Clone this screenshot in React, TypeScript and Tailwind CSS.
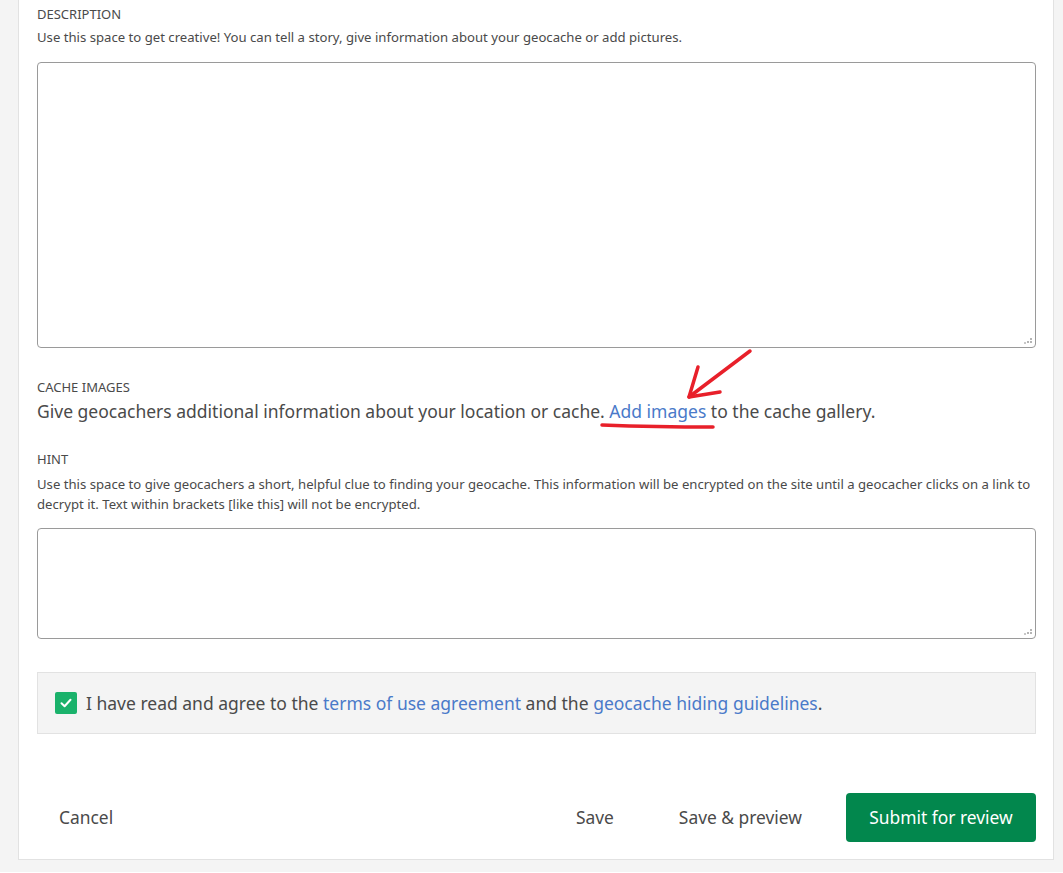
import React from 'react';

const font = { fontFamily: '"Noto Sans", "Open Sans", sans-serif' };

function ResizeGrip() {
  return (
    <svg className="absolute right-[3px] bottom-[3px]" width="8" height="8" viewBox="0 0 8 8">
      <rect x="6" y="2" width="2" height="2" fill="#b5b5b5" />
      <rect x="3" y="5" width="2" height="2" fill="#b5b5b5" />
      <rect x="6" y="5" width="2" height="2" fill="#b5b5b5" />
      <rect x="0" y="6" width="2" height="2" fill="#c8c8c8" />
    </svg>
  );
}

export default function App() {
  return (
    <div className="min-h-[873px] bg-[#f4f4f4] pl-[18px] pr-[9px]" style={font}>
      <div className="relative -mt-px border border-[#e2e2e2] bg-white pl-[18px] pr-[17px] pb-[17px]">
        {/* Description */}
        <div className="pt-[5px] text-[13px] leading-[18px] text-[#4a4a4a]">DESCRIPTION</div>
        <p className="mt-[5px] text-[13.15px] leading-[18px] text-[#4a4a4a]">
          Use this space to get creative! You can tell a story, give information about your geocache or add pictures.
        </p>
        <div className="relative mt-[16px] h-[286px] rounded-[4px] border border-[#9a9a9a] bg-white">
          <ResizeGrip />
        </div>

        {/* Cache images */}
        <div className="mt-[30px] text-[13px] leading-[18px] text-[#4a4a4a]">CACHE IMAGES</div>
        <p className="mt-[3px] text-[17.5px] leading-[24px] text-[#4a4a4a]">
          Give geocachers additional information about your location or cache.{' '}
          <a className="text-[#4a7ac9]">Add images</a> to the cache gallery.
        </p>

        {/* Hint */}
        <div className="mt-[27px] text-[13px] leading-[18px] text-[#4a4a4a]">HINT</div>
        <p className="mt-[6px] text-[13.15px] leading-[20px] text-[#4a4a4a]">
          Use this space to give geocachers a short, helpful clue to finding your geocache. This information will be encrypted on the site until a geocacher clicks on a link to decrypt it. Text within brackets [like this] will not be encrypted.
        </p>
        <div className="relative mt-[14px] h-[111px] rounded-[4px] border border-[#9a9a9a] bg-white">
          <ResizeGrip />
        </div>

        {/* Agreement */}
        <div className="mt-[33px] flex h-[62px] items-center gap-[9px] border border-[#e2e2e2] bg-[#f4f4f4] pl-[17px]">
          <span className="flex h-[22px] w-[22px] items-center justify-center rounded-[2px] bg-[#1ab26b]">
            <svg width="14" height="14" viewBox="0 0 14 14" fill="none">
              <path d="M2.5 7.2 L5.6 10.2 L11.5 3.8" stroke="white" strokeWidth="2" strokeLinecap="round" strokeLinejoin="round" />
            </svg>
          </span>
          <span className="text-[17.5px] text-[#4a4a4a]">
            I have read and agree to the <a className="text-[#4a7ac9]">terms of use agreement</a> and the{' '}
            <a className="text-[#4a7ac9]">geocache hiding guidelines</a>.
          </span>
        </div>

        {/* Actions */}
        <div className="mt-[59px] flex items-center">
          <button className="ml-[22px] text-[17.4px] text-[#4a4a4a]">Cancel</button>
          <div className="ml-auto flex items-center">
            <button className="text-[17.4px] text-[#4a4a4a]">Save</button>
            <button className="ml-[65px] text-[17.4px] text-[#4a4a4a]">Save &amp; preview</button>
            <button className="ml-[44px] h-[49px] w-[190px] rounded-[4px] bg-[#02874d] text-[17.4px] text-white">
              Submit for review
            </button>
          </div>
        </div>

        {/* Red annotation */}
        <svg className="pointer-events-none absolute left-[-18px] top-0" width="1063" height="873">
          <g stroke="#e8202a" strokeWidth="3.5" strokeLinecap="round" fill="none">
            <path d="M749 351 L688 397" />
            <path d="M697 367 L688 397 L719 392" strokeLinejoin="round" />
            <path d="M601 425 Q655 427 712 427" />
          </g>
        </svg>
      </div>
    </div>
  );
}
